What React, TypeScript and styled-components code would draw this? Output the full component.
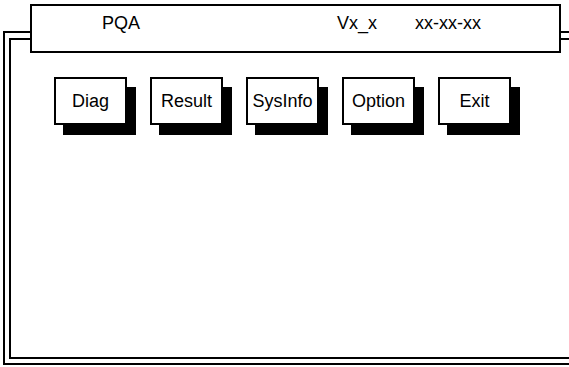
import { memo } from 'react'
import styled, { createGlobalStyle } from 'styled-components'

const GlobalStyle = createGlobalStyle`
  html, body {
    margin: 0;
    padding: 0;
    background: #fff;
    overflow: hidden;
  }
  body {
    font-family: "Liberation Sans", Arial, Helvetica, sans-serif;
    color: #000;
  }
`

const Screen = styled.div`
  position: relative;
  width: 569px;
  height: 367px;
  padding: 31px 0 0 3px;
  box-sizing: border-box;
  overflow: hidden;
`

// 双线外框：右侧延伸出画面
const OuterFrame = styled.div`
  display: flex;
  height: 334px;
  padding: 5px 0 4px 4px;
  border: 2px solid #000;
  border-right: none;
  box-sizing: border-box;
`

const InnerFrame = styled.div`
  flex: 1;
  padding: 37px 0 0 43px;
  border: 2px solid #000;
  border-right: none;
`

// 标题栏压在外框上
const TitleBar = styled.div`
  position: absolute;
  top: 4px;
  left: 30px;
  z-index: 1;
  display: flex;
  width: 531px;
  height: 49px;
  padding: 8px 0 0 70px;
  border: 2px solid #000;
  background: #fff;
  box-sizing: border-box;
  font-size: 18px;
  line-height: 18px;
`

const TitleText = styled.span<{ $width?: number }>`
  flex: 0 0 ${({ $width }) => ($width ? `${$width}px` : 'auto')};
  white-space: nowrap;
`

const ButtonRow = styled.div`
  display: flex;
  gap: 23px;
`

const MenuButton = styled.div`
  display: flex;
  align-items: center;
  justify-content: center;
  width: 73px;
  height: 48px;
  border: 2px solid #000;
  background: #fff;
  box-shadow: 9px 10px 0 #000;
  box-sizing: border-box;
  font-size: 18px;
  white-space: nowrap;
`

const menuItems = ['Diag', 'Result', 'SysInfo', 'Option', 'Exit']

const App = memo(() => {
  return (
    <>
      <GlobalStyle />
      <Screen>
        <TitleBar>
          <TitleText $width={235}>PQA</TitleText>
          <TitleText $width={78}>Vx_x</TitleText>
          <TitleText>xx-xx-xx</TitleText>
        </TitleBar>
        <OuterFrame>
          <InnerFrame>
            <ButtonRow>
              {menuItems.map((item) => (
                <MenuButton key={item}>{item}</MenuButton>
              ))}
            </ButtonRow>
          </InnerFrame>
        </OuterFrame>
      </Screen>
    </>
  )
})

App.displayName = 'App'

export default App
